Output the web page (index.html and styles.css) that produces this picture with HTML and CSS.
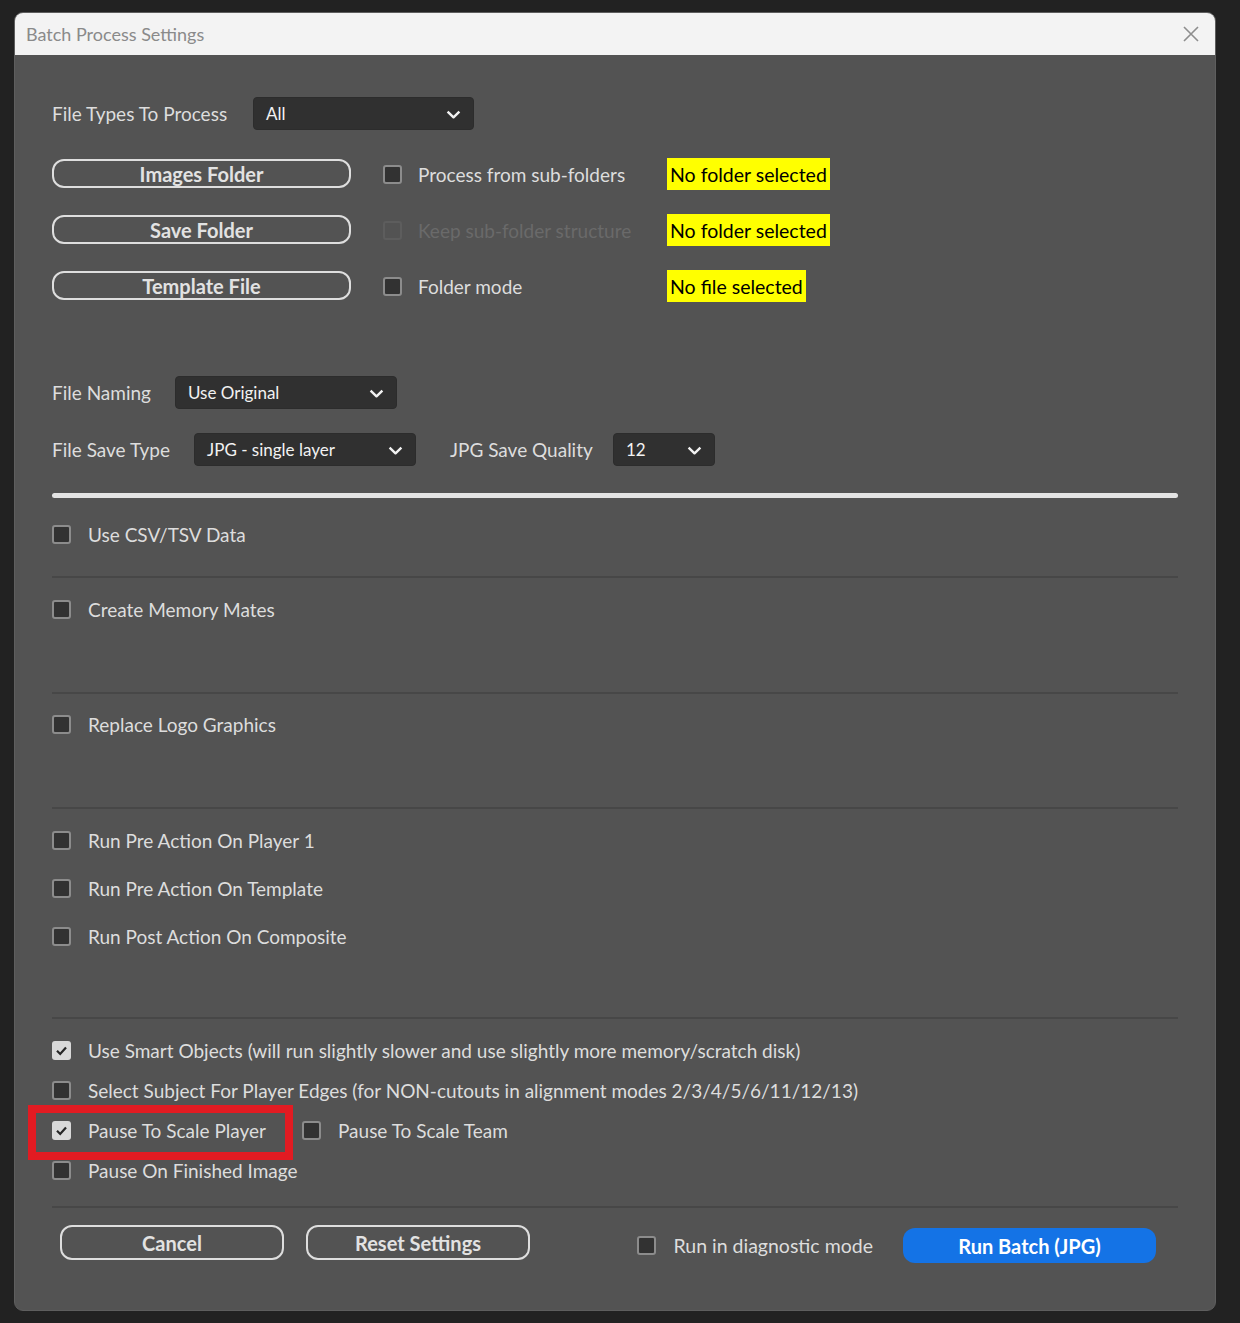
FILE: index.html
```html
<!DOCTYPE html>
<html lang="en">
<head>
<meta charset="utf-8">
<title>Batch Process Settings</title>
<link rel="stylesheet" href="styles.css">
</head>
<body>
<div class="window">
  <div class="titlebar">
    <span class="title">Batch Process Settings</span>
    <svg class="close" width="16" height="16" viewBox="0 0 16 16"><path d="M1 1 L15 15 M15 1 L1 15" stroke="#8d8d8d" stroke-width="1.6" fill="none"/></svg>
  </div>
  <div class="content">
    <div class="row row-types">
      <span class="label lw-types">File Types To Process</span>
      <div class="select sw-types"><span>All</span><svg class="chev" width="15" height="9" viewBox="0 0 15 9"><path d="M1.6 1.6 L7.5 7.3 L13.4 1.6" stroke="#f2f2f2" stroke-width="2.4" fill="none" stroke-linejoin="round"/></svg></div>
    </div>

    <div class="folder-grid">
      <button class="btn-outline btn-folder">Images Folder</button>
      <label class="check"><span class="box"></span><span>Process from sub-folders</span></label>
      <span class="status">No folder selected</span>

      <button class="btn-outline btn-folder">Save Folder</button>
      <label class="check disabled"><span class="box"></span><span>Keep sub-folder structure</span></label>
      <span class="status">No folder selected</span>

      <button class="btn-outline btn-folder">Template File</button>
      <label class="check"><span class="box"></span><span>Folder mode</span></label>
      <span class="status">No file selected</span>
    </div>

    <div class="row row-naming">
      <span class="label lw-naming">File Naming</span>
      <div class="select sw-wide"><span>Use Original</span><svg class="chev" width="15" height="9" viewBox="0 0 15 9"><path d="M1.6 1.6 L7.5 7.3 L13.4 1.6" stroke="#f2f2f2" stroke-width="2.4" fill="none" stroke-linejoin="round"/></svg></div>
    </div>

    <div class="row row-save">
      <span class="label lw-save">File Save Type</span>
      <div class="select sw-wide"><span>JPG - single layer</span><svg class="chev" width="15" height="9" viewBox="0 0 15 9"><path d="M1.6 1.6 L7.5 7.3 L13.4 1.6" stroke="#f2f2f2" stroke-width="2.4" fill="none" stroke-linejoin="round"/></svg></div>
      <span class="label lw-quality">JPG Save Quality</span>
      <div class="select sw-quality"><span>12</span><svg class="chev" width="15" height="9" viewBox="0 0 15 9"><path d="M1.6 1.6 L7.5 7.3 L13.4 1.6" stroke="#f2f2f2" stroke-width="2.4" fill="none" stroke-linejoin="round"/></svg></div>
    </div>

    <div class="thick-line"></div>

    <div class="section sec-1">
      <label class="check"><span class="box"></span><span>Use CSV/TSV Data</span></label>
    </div>
    <div class="sep"></div>
    <div class="section sec-2">
      <label class="check"><span class="box"></span><span>Create Memory Mates</span></label>
    </div>
    <div class="sep"></div>
    <div class="section sec-3">
      <label class="check"><span class="box"></span><span>Replace Logo Graphics</span></label>
    </div>
    <div class="sep"></div>
    <div class="section sec-4">
      <label class="check"><span class="box"></span><span>Run Pre Action On Player 1</span></label>
      <label class="check"><span class="box"></span><span>Run Pre Action On Template</span></label>
      <label class="check"><span class="box"></span><span>Run Post Action On Composite</span></label>
    </div>
    <div class="sep"></div>
    <div class="section sec-5">
      <label class="check"><span class="box checked"><svg width="19" height="19" viewBox="0 0 19 19"><path d="M5 9.8 L8.2 13 L14 6.4" stroke="#262626" stroke-width="2.2" fill="none"/></svg></span><span>Use Smart Objects (will run slightly slower and use slightly more memory/scratch disk)</span></label>
      <label class="check"><span class="box"></span><span>Select Subject For Player Edges (for NON-cutouts in alignment modes 2/3/4/5/6/11/12/13)</span></label>
      <div class="pause-row">
        <span class="highlight"></span>
        <label class="check check-player"><span class="box checked"><svg width="19" height="19" viewBox="0 0 19 19"><path d="M5 9.8 L8.2 13 L14 6.4" stroke="#262626" stroke-width="2.2" fill="none"/></svg></span><span>Pause To Scale Player</span></label>
        <label class="check"><span class="box"></span><span>Pause To Scale Team</span></label>
      </div>
      <label class="check"><span class="box"></span><span>Pause On Finished Image</span></label>
    </div>
    <div class="sep"></div>

    <div class="footer">
      <button class="btn-outline btn-footer btn-cancel">Cancel</button>
      <button class="btn-outline btn-footer btn-reset">Reset Settings</button>
      <label class="check diag"><span class="box"></span><span>Run in diagnostic mode</span></label>
      <button class="btn-run">Run Batch (JPG)</button>
    </div>
  </div>
</div>
</body>
</html>
```

FILE: styles.css
```css
* { box-sizing: border-box; }

html, body {
  margin: 0;
  padding: 0;
  background: #222222;
}

body {
  font-family: Lato, "Open Sans", sans-serif;
  color: #dcdcdc;
}

.window {
  margin: 12px 0 0 14px;
  width: 1202px;
  height: 1299px;
  border: 1px solid #5e5e5e;
  border-radius: 9px;
  overflow: hidden;
  display: flex;
  flex-direction: column;
  background: #535353;
}

.titlebar {
  height: 42px;
  flex: none;
  background: #f3f3f3;
  display: flex;
  align-items: center;
  justify-content: space-between;
  padding: 0 16px 0 11px;
}

.title {
  font-size: 18px;
  color: #8a8a8a;
  margin-top: -1px;
}

.close { display: block; }

.content {
  flex: 1;
  padding: 42px 37px 0 37px;
}

.row {
  display: flex;
  align-items: center;
  height: 33px;
}

.label {
  font-size: 19px;
  color: #dddddd;
  flex: none;
}

.lw-types { width: 201px; }
.lw-naming { width: 123px; }
.lw-save { width: 142px; }
.lw-quality { width: 163px; margin-left: 34px; }

.select {
  height: 33px;
  background: #303030;
  border: 1px solid #2c2c2c;
  border-radius: 4px;
  display: flex;
  align-items: center;
  justify-content: space-between;
  padding: 0 12px 0 12px;
  font-size: 17px;
  color: #f2f2f2;
  flex: none;
}

.sw-types { width: 221px; }
.sw-wide { width: 222px; }
.sw-quality { width: 102px; }

.chev { display: block; margin-top: 1px; }

.folder-grid {
  margin-top: 28px;
  display: grid;
  grid-template-columns: 299px 252px auto;
  grid-auto-rows: 32px;
  row-gap: 24px;
  column-gap: 32px;
  align-items: center;
  justify-items: start;
}

.btn-outline {
  background: transparent;
  border: 2px solid #dedede;
  color: #e2e2e2;
  font-family: Lato, "Open Sans", sans-serif;
  font-weight: 700;
  font-size: 20px;
  padding: 0;
  display: flex;
  align-items: center;
  justify-content: center;
}

.btn-folder {
  width: 299px;
  height: 29px;
  border-radius: 12px;
  margin-top: -1px;
}

.status {
  background: #ffff00;
  color: #000000;
  font-size: 19.5px;
  height: 32px;
  display: flex;
  align-items: center;
  padding: 0 3px;
}

.row-naming { margin-top: 74px; }
.row-save { margin-top: 24px; }

.thick-line {
  margin-top: 27px;
  height: 5px;
  border-radius: 3px;
  background: #e3e3e3;
}

.check {
  display: flex;
  align-items: center;
  gap: 17px;
  height: 32px;
  font-size: 19px;
  color: #dddddd;
  white-space: nowrap;
}

.folder-grid .check { gap: 16px; }

.box {
  width: 19px;
  height: 19px;
  flex: none;
  border: 2px solid #8c8c8c;
  border-radius: 3px;
  background: #323232;
  position: relative;
}

.box.checked {
  border: none;
  background: #d9d9d9;
}

.box.checked svg {
  display: block;
}

.check.disabled { color: #6a6a6a; }
.check.disabled .box {
  border-color: #5d5d5d;
  background: #535353;
}

.sep {
  height: 2px;
  background: #474747;
}

.section {
  display: flex;
  flex-direction: column;
}

.sec-1 { padding: 20px 0 26px; }
.sec-2 { padding: 15px 0 67px; }
.sec-3 { padding: 14px 0 67px; }
.sec-4 { padding: 15px 0 65px; gap: 16px; }
.sec-5 { padding: 15px 0 20px; gap: 8px; }

.pause-row {
  position: relative;
  display: flex;
  align-items: center;
  height: 32px;
}

.check-player { width: 250px; }

.highlight {
  position: absolute;
  left: -24px;
  top: -9px;
  width: 265px;
  height: 55px;
  border: 8px solid #e21b22;
  pointer-events: none;
}

.footer {
  display: flex;
  align-items: flex-start;
  padding: 17px 22px 0 8px;
}

.btn-footer {
  width: 224px;
  height: 35px;
  border-radius: 12px;
}

.btn-reset { margin-left: 22px; }

.diag {
  margin-left: auto;
  margin-top: 4px;
  font-size: 19.5px;
}

.btn-run {
  margin-left: 30px;
  margin-top: 3px;
  width: 253px;
  height: 35px;
  border: none;
  border-radius: 12px;
  background: #1473e6;
  color: #ffffff;
  font-family: Lato, "Open Sans", sans-serif;
  font-weight: 700;
  font-size: 20px;
  padding: 0;
}
```
